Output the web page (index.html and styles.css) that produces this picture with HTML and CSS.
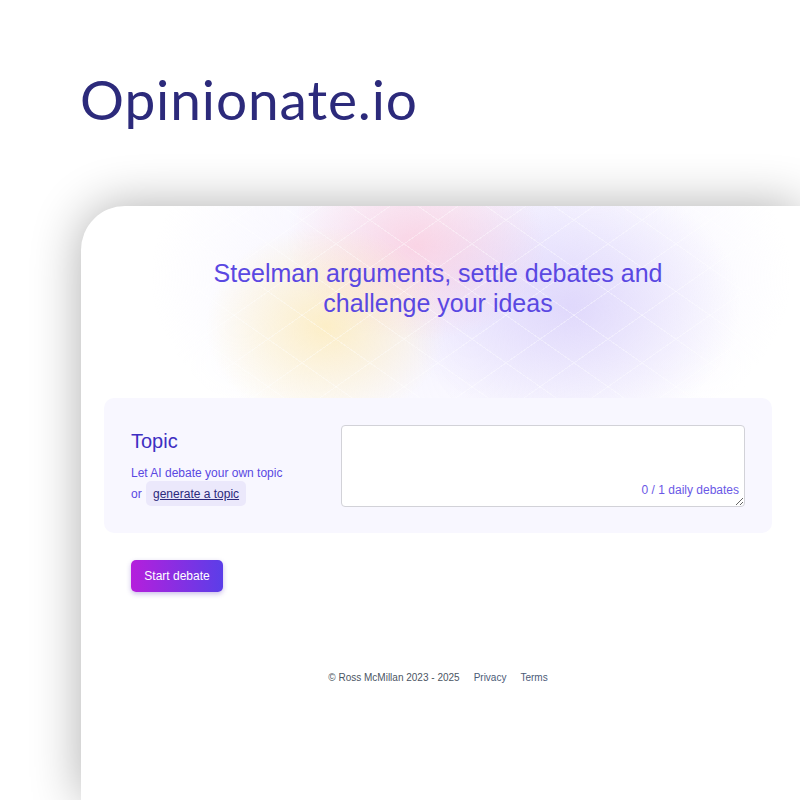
FILE: index.html
```html
<!DOCTYPE html>
<html lang="en">
<head>
  <meta charset="UTF-8" />
  <meta name="viewport" content="width=device-width, initial-scale=1.0" />
  <title>Opinionate.io</title>
  <link rel="stylesheet" href="styles.css">
</head>
<body>

<div class="brand">Opinionate.io</div>

<div class="window">
  <div class="hero">
    <h1>Steelman arguments, settle debates and<br>challenge your ideas</h1>
  </div>

  <div class="content">
    <div class="topic-panel">
      <div class="topic-info">
        <h2>Topic</h2>
        <p>Let AI debate your own topic</p>
        <p class="or">or <span class="chip">generate a topic</span></p>
      </div>
      <div class="topic-field">
        <textarea id="topic"></textarea>
        <span class="counter">0 / 1 daily debates</span>
      </div>
    </div>

    <button class="start">Start debate</button>

    <div class="footer">
      <span>&copy; Ross McMillan 2023 - 2025</span>
      <a href="#">Privacy</a>
      <a href="#">Terms</a>
    </div>
  </div>
</div>

</body>
</html>
```

FILE: styles.css
```css
    html, body {
      margin: 0;
      padding: 0;
      background: #fff;
      overflow: hidden;
      height: 800px;
    }

    body {
      font-family: 'Liberation Sans', Arial, sans-serif;
    }

    .brand {
      font-family: 'Lato', sans-serif;
      font-size: 55px;
      color: #2c2a7b;
      padding: 66px 0 0 80px;
      height: 140px;
      box-sizing: border-box;
      letter-spacing: 0.9px;
    }

    .window {
      margin: 66px 0 0 81px;
      width: 719px;
      height: 594px;
      overflow: hidden;
      background: #fff;
      border-radius: 44px 0 0 0;
      box-shadow: 0 0 50px rgba(0,0,0,0.32);
    }

    .hero {
      width: 714px;
      height: 192px;
      box-sizing: border-box;
      padding-top: 52px;
      text-align: center;
      border-radius: 44px 0 0 0;
      background:
        repeating-linear-gradient(35deg, transparent 0 38px, rgba(255,255,255,0.35) 38px 39px),
        repeating-linear-gradient(-35deg, transparent 0 38px, rgba(255,255,255,0.35) 38px 39px),
        radial-gradient(ellipse 120px 100px at 245px 120px, rgba(255,234,170,0.65), transparent),
        radial-gradient(ellipse 130px 95px at 335px 40px, rgba(252,200,218,0.7), transparent),
        radial-gradient(ellipse 170px 130px at 490px 100px, rgba(212,202,250,0.65), transparent),
        radial-gradient(ellipse 320px 200px at 390px 70px, rgba(238,234,255,0.85), rgba(255,255,255,0) 100%);
    }

    .hero h1 {
      margin: 0;
      font-size: 25px;
      font-weight: normal;
      line-height: 30px;
      color: #5a48e2;
    }

    .content {
      width: 668px;
      margin-left: 23px;
    }

    .topic-panel {
      display: flex;
      gap: 28px;
      background: #f8f7ff;
      border-radius: 10px;
      padding: 27px 27px 26px 27px;
    }

    .topic-info {
      width: 182px;
    }

    .topic-info h2 {
      margin: 5px 0 10px;
      font-size: 20px;
      font-weight: normal;
      color: #3e2fc2;
    }

    .topic-info p {
      margin: 0;
      font-size: 12px;
      line-height: 20px;
      color: #5a48e2;
    }

    .topic-info .or {
      margin-top: -2px;
    }

    .chip {
      display: inline-block;
      margin-left: 1px;
      padding: 4px 7px 3px;
      background: #ebe8fb;
      border-radius: 5px;
      color: #2c2a7b;
      text-decoration: underline;
      line-height: 18px;
    }

    .topic-field {
      flex: 1;
      position: relative;
    }

    #topic {
      display: block;
      width: 100%;
      height: 82px;
      box-sizing: border-box;
      border: 1px solid #d2d2d8;
      border-radius: 4px;
      background: #fff;
    }

    .counter {
      position: absolute;
      right: 6px;
      bottom: 10px;
      font-size: 12px;
      color: #6a58e6;
    }

    .start {
      margin: 27px 0 0 27px;
      width: 92px;
      height: 32px;
      border: none;
      border-radius: 5px;
      background: linear-gradient(90deg, #b51fdc, #5b3ee8);
      color: #fff;
      font-family: 'Liberation Sans', Arial, sans-serif;
      font-size: 12px;
      box-shadow: 0 2px 5px rgba(80,40,180,0.3);
    }

    .footer {
      display: flex;
      justify-content: center;
      gap: 14px;
      margin-top: 80px;
      font-size: 10px;
      color: #4b5563;
    }

    .footer a {
      color: #4b5a77;
      text-decoration: none;
    }
```
